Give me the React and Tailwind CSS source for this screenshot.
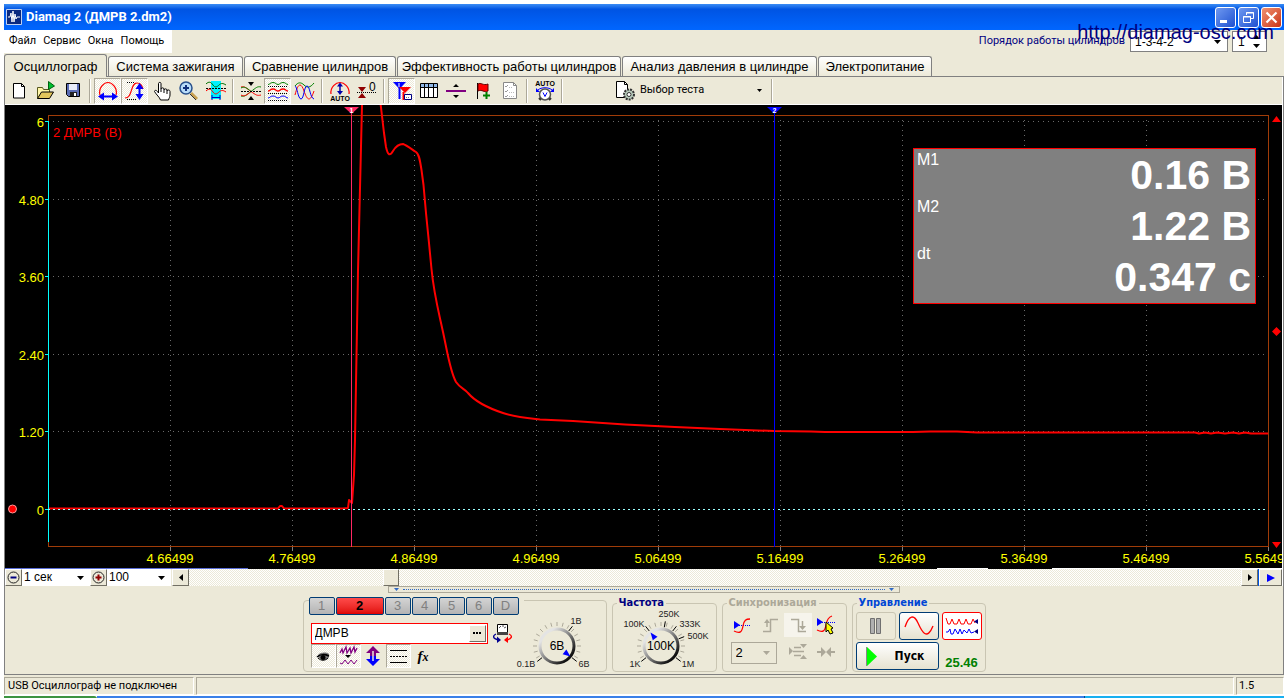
import React, { useState } from "react";

const PRESSED =
  "border border-t-[#aca899] border-l-[#aca899] border-b-white border-r-white bg-[conic-gradient(#fff_25%,#ece9d8_0_50%,#fff_0_75%,#ece9d8_0)] bg-[length:2px_2px]";

const tabs = [
  { label: "Осциллограф", width: "w-[103px]" },
  { label: "Система зажигания", width: "w-[135px]" },
  { label: "Сравнение цилиндров", width: "w-[152px]" },
  { label: "Эффективность работы цилиндров", width: "w-[224px]" },
  { label: "Анализ давления в цилиндре", width: "w-[195px]" },
  { label: "Электропитание", width: "w-[114px]" },
];

/* ---------- toolbar icons ---------- */

const Icon = ({ children, w = 22, h = 22 }) => (
  <svg width={w} height={h} viewBox={`0 0 ${w} ${h}`} fill="none" aria-hidden="true">
    {children}
  </svg>
);

const NewIcon = () => (
  <Icon>
    <path d="M5.5 3.5h8l3 3v11.5h-11z" fill="#fff" stroke="#000" />
    <path d="M13.5 3.5v3h3" stroke="#000" />
  </Icon>
);

const OpenIcon = () => (
  <Icon>
    <path d="M2.5 18.5v-11h5l1 2h6v3" fill="#fff6a8" stroke="#5a5a20" />
    <path d="M2.5 18.5l4-6.5h12l-4 6.5z" fill="#e2c65c" stroke="#000" />
    <path d="M13.5 1.5v8l6-3.5z" fill="#00c030" stroke="#006010" />
  </Icon>
);

const SaveIcon = () => (
  <Icon>
    <path d="M4.5 3.5h13v13h-11l-2-2z" fill="#5a6cb4" stroke="#000" />
    <path d="M7 4h8v6h-8z" fill="#e8ecf8" />
    <path d="M8 12h7v4h-7z" fill="#222" />
    <path d="M12 13h2v3h-2z" fill="#fff" />
  </Icon>
);

const HorizontalIcon = () => (
  <Icon>
    <path d="M3 15C1 8 7 2.500 11 2.500S21 8 19 15" stroke="#f00" strokeWidth="1.200" />
    <path d="M5 16.500h12" stroke="#00f" strokeWidth="2" />
    <path d="M1 16.500l6-4v8zM21 16.500l-6-4v8z" fill="#00f" />
  </Icon>
);

const VerticalIcon = () => (
  <Icon>
    <path d="M3 2.500h8M3 19.500h10" stroke="#000" strokeDasharray="1 1" />
    <path d="M1 18c8 0 5-15 12-15 3 0 5 2 6 6" stroke="#f00" strokeWidth="1.200" />
    <path d="M15.500 7v10" stroke="#00f" strokeWidth="2" />
    <path d="M15.500 3l-4 6h8zM15.500 20l-4-6h8z" fill="#00f" />
  </Icon>
);

const HandIcon = () => (
  <Icon>
    <path
      d="M7.500 13V3.500c0-1.500 2.500-1.500 2.500 0V9c0-1.500 3-1.500 3 0v1c0-1.500 3-1.500 3 0v1c0-1.500 3-1.500 3 .5V15c0 2-1 3-1.500 5h-8c-1-3-4-5-6-8.500 0-1.500 2-2 4 1.500z"
      fill="#fff"
      stroke="#000"
    />
    <path d="M10 9v3M13 10v3M16 11v3" stroke="#000" />
  </Icon>
);

const ZoomIcon = () => (
  <Icon>
    <path d="M13 13l6 6" stroke="#c8a050" strokeWidth="3" />
    <path d="M12 14l6 6" stroke="#303030" strokeWidth="1" />
    <circle cx="8" cy="8" r="6" fill="#b8dcf8" stroke="#28508c" strokeWidth="1.500" />
    <path d="M8 5v6M5 8h6" stroke="#10307c" strokeWidth="2" />
  </Icon>
);

const SelectionIcon = () => (
  <Icon>
    <path d="M6 1h10v18h-10z" fill="#00f0ff" />
    <path d="M1 4c3-3 5-2 7 1s4 2 6 0 4-2 7 0" stroke="#007000" />
    <path d="M1 8.500h20" stroke="#000" strokeDasharray="2 1" />
    <path d="M1 11c3-3 5-2 7 1s4 2 6 0 4-2 7 0" stroke="#f00" />
    <path d="M7 17.500h8M7 15v5M15 15v5" stroke="#0000c0" />
  </Icon>
);

const MergeIcon = () => (
  <Icon>
    <path d="M1 7c4-1 5 1 10 4.500S17 16 21 15" stroke="#f00" />
    <path d="M1 8c3-2 6 0 10 3.500" stroke="#008000" />
    <path d="M1 16c4 1 5-1 10-4.500S17 6 21 7" stroke="#008000" />
    <path d="M1 15c3 2 6 0 10-3.500" stroke="#f00" />
    <path d="M1 11.500h20" stroke="#000" strokeDasharray="2 1" />
    <path d="M8 2h6l-3 4zM8 20h6l-3-4z" fill="#000" />
  </Icon>
);

const StackIcon = () => (
  <Icon>
    <path d="M1 4.500c2 0 2-2 5-2s3 2 5 2 2-2 5-2 3 2 5 2" stroke="#008000" />
    <path d="M1 11c2 0 2-2 5-2s3 2 5 2 2-2 5-2 3 2 5 2" stroke="#f00" strokeWidth="1.300" />
    <path d="M1 18c2 0 2-2 5-2s3 2 5 2 2-2 5-2 3 2 5 2" stroke="#00f" />
    <path d="M1 6.500h20M1 13.500h20M1 20.500h20" stroke="#000" strokeDasharray="1 1" />
  </Icon>
);

const OverlayIcon = () => (
  <Icon>
    <path d="M1 6c3-4 6-4 9-1s6 3 10-2" stroke="#008000" />
    <path d="M1 15c3-12 6-13 9-4s6 12 10 0" stroke="#f00" />
    <path d="M1 6c2 0 3 13 6 13s3-13 6-13 3 12 7 13" stroke="#00f" />
  </Icon>
);

const AutoIcon = () => (
  <Icon>
    <path d="M2 14C1 7 7 2.500 11 2.500S21 7 20 14" stroke="#f00" strokeWidth="1.200" />
    <path d="M11 5v8" stroke="#00a" strokeWidth="1.500" />
    <path d="M11 2.500l-3 4h6zM11 15l-3-4h6z" fill="#00a" />
    <text x="11" y="21" textAnchor="middle" fontSize="7" fontWeight="700" fill="#000">
      AUTO
    </text>
  </Icon>
);

const ZeroIcon = () => (
  <Icon>
    <path d="M2 7h8l-4 5zM2 18h8l-4-5z" fill="#900000" />
    <path d="M1 12.500h20" stroke="#000" strokeDasharray="1 1" />
    <text x="13" y="11" fontSize="12" fill="#000">
      0
    </text>
  </Icon>
);

const MarkersIcon = () => (
  <Icon>
    <path d="M2 2h13l-6.500 7z" fill="#00f" />
    <path d="M8.500 8v11" stroke="#00f" strokeWidth="2" />
    <path d="M8 7h12l-6 6z" fill="#f00" />
    <path d="M12.500 12v8" stroke="#f00" strokeWidth="2" />
    <path d="M8 3v4" stroke="#fff" />
    <path d="M13.500 14.500h7v5h-7z" fill="#fff" stroke="#000080" />
    <path d="M15 17.500h4" stroke="#777" strokeDasharray="1 1" />
  </Icon>
);

const TableIcon = () => (
  <Icon>
    <path d="M2.500 3.500h17v14h-17z" fill="#fff" stroke="#000" />
    <path d="M3 4h16v3h-16z" fill="#90b8e8" />
    <path d="M2 7.500h18M6.500 4v13M10.500 4v13M15.500 4v13" stroke="#000" />
  </Icon>
);

const SplitIcon = () => (
  <Icon>
    <path d="M1 11h20" stroke="#800080" strokeWidth="2" />
    <path d="M8 7h6l-3-3zM8 15h6l-3 3z" fill="#000" />
  </Icon>
);

const FlagIcon = () => (
  <Icon>
    <path d="M5.500 3v16" stroke="#000" />
    <path d="M6 4c3-2 5 2 10 0v7c-4 2-6-2-10 0z" fill="#f00" stroke="#600000" />
    <path d="M14.500 12v7M11 15.500h7" stroke="#008000" strokeWidth="2" />
  </Icon>
);

const ChecklistIcon = () => (
  <Icon>
    <path d="M4.500 2.500h10l3 3v13h-13z" fill="#fff" stroke="#888" />
    <path d="M14.500 2.500v3h3" stroke="#888" />
    <path d="M6 6l1 1 2-2M6 11l1 1 2-2M6 16l1 1 2-2" stroke="#999" />
    <path d="M10 7.500h4M10 12.500h5M10 16.500h5" stroke="#bbb" strokeDasharray="1 1" />
  </Icon>
);

const AutoVoltIcon = () => (
  <Icon>
    <text x="11" y="6" textAnchor="middle" fontSize="7" fontWeight="700" fill="#000">
      AUTO
    </text>
    <path d="M4 10c3-3 11-3 14 0" stroke="#00f" />
    <path d="M2 8v4h4zM20 8v4h-4z" fill="#00f" />
    <circle cx="11" cy="14.500" r="5.500" fill="#fff" stroke="#555" strokeWidth="1.500" />
    <path d="M9 12.500l2 4 2-4" stroke="#00f" />
    <path d="M5 18l2 2M17 18l-2 2" stroke="#333" strokeWidth="2" />
  </Icon>
);

const TestIcon = () => (
  <Icon>
    <path d="M2.500 1.500h8l3 3v13h-11z" fill="#fff" stroke="#000" />
    <path d="M10.500 1.500v3h3" stroke="#000" />
    <circle cx="15" cy="14.500" r="5" fill="#b8ccbc" stroke="#333" strokeWidth="2" strokeDasharray="2 1" />
    <circle cx="15" cy="14.500" r="2" fill="#fff" stroke="#333" />
  </Icon>
);

const toolGroups = [
  [
    { name: "Новый", icon: NewIcon },
    { name: "Открыть", icon: OpenIcon },
    { name: "Сохранить", icon: SaveIcon },
  ],
  [
    { name: "По горизонтали", icon: HorizontalIcon, pressed: true },
    { name: "По вертикали", icon: VerticalIcon, pressed: true },
    { name: "Рука", icon: HandIcon },
    { name: "Масштаб", icon: ZoomIcon },
    { name: "Выделение", icon: SelectionIcon },
  ],
  [
    { name: "Совместить", icon: MergeIcon },
    { name: "Разнести", icon: StackIcon, pressed: true },
    { name: "Наложить", icon: OverlayIcon },
  ],
  [
    { name: "Автомасштаб", icon: AutoIcon },
    { name: "Ноль", icon: ZeroIcon },
  ],
  [
    { name: "Маркеры", icon: MarkersIcon, pressed: true },
    { name: "Таблица", icon: TableIcon },
    { name: "Разделитель", icon: SplitIcon },
    { name: "Метка", icon: FlagIcon },
    { name: "Список", icon: ChecklistIcon },
  ],
  [{ name: "Авто вольтметр", icon: AutoVoltIcon }],
];

const Separator = () => (
  <div className="mx-[3px] h-[24px] w-[2px] border-l border-[#aca899] bg-white" />
);

/* A select without the native arrow, so that the small black one can be used */
const Combo = ({ label, options, className, selectClass = "", arrow = "#000", disabled }) => (
  <div className={`relative flex items-center ${className}`}>
    <select
      aria-label={label}
      disabled={disabled}
      className={`h-full w-full appearance-none bg-transparent outline-none ${selectClass}`}
    >
      {options.map((o) => (
        <option key={o}>{o}</option>
      ))}
    </select>
    <svg className="pointer-events-none absolute right-[6px]" width="7" height="4" viewBox="0 0 7 4">
      <path d="M0 0h7l-3.500 4z" fill={arrow} />
    </svg>
  </div>
);

/* ---------- title, menu, tabs ---------- */

const TitleBar = () => (
  <header className="flex h-[26px] items-center gap-[4px] bg-linear-to-b from-[#3a8cf4] via-[#0054e3] via-20% to-[#0066ff] px-[2px]">
    <svg width="16" height="16" viewBox="0 0 16 16" aria-hidden="true">
      <path d="M.5.5h15v15H.5z" fill="#0a2a80" stroke="#c0d0f0" />
      <path d="M2 8h2l1-4 1 9 1-11 1 11 1-8 1 5 1-2h3" stroke="#fff" fill="none" />
    </svg>
    <h1 className="flex-1 font-[Roboto,'Liberation_Sans',sans-serif] text-[13px] font-bold text-white">
      Diamag 2 (ДМРВ 2.dm2)
    </h1>
    <div className="flex gap-[2px]">
      <button aria-label="Свернуть" className="h-[21px] w-[21px] rounded-[3px] border border-white bg-linear-to-br from-[#6f98f0] to-[#1f4fd0]">
        <svg width="19" height="19" viewBox="0 0 19 19">
          <path d="M4 12h7v3H4z" fill="#fff" />
        </svg>
      </button>
      <button aria-label="Восстановить" className="h-[21px] w-[21px] rounded-[3px] border border-white bg-linear-to-br from-[#6f98f0] to-[#1f4fd0]">
        <svg width="19" height="19" viewBox="0 0 19 19" fill="none" stroke="#fff">
          <path d="M7.500 7V4.500h7v6H12M7 5h8" />
          <path d="M4.500 8.500h7v6h-7zM4 9h8" />
        </svg>
      </button>
      <button aria-label="Закрыть" className="h-[21px] w-[21px] rounded-[3px] border border-white bg-linear-to-br from-[#f09070] to-[#c83010]">
        <svg width="19" height="19" viewBox="0 0 19 19">
          <path d="M4.500 4.500l10 10M14.500 4.500l-10 10" stroke="#fff" strokeWidth="2.200" />
        </svg>
      </button>
    </div>
  </header>
);

const MenuBar = () => (
  <div className="flex h-[25px] items-start justify-between pr-[17px]">
    <nav className="flex h-[23px] items-center gap-[7px] bg-white pr-[8px] pl-[5px] font-[Roboto,'Liberation_Sans',sans-serif] text-[11px]">
      {["Файл", "Сервис", "Окна", "Помощь"].map((item) => (
        <button key={item}>{item}</button>
      ))}
    </nav>
    <div className="relative flex items-center gap-[5px] pt-[1px]">
      <label htmlFor="order" className="font-[Roboto,'Liberation_Sans',sans-serif] text-[11px] text-[#000080]">
        Порядок работы цилиндров
      </label>
      <div className="relative flex h-[21px] w-[98px] items-center border border-[#808080] bg-white">
        <select id="order" className="h-full w-full appearance-none pl-[4px] text-[12px] leading-none outline-none">
          <option>1-3-4-2</option>
        </select>
        <svg className="pointer-events-none absolute right-[6px]" width="7" height="4" viewBox="0 0 7 4">
          <path d="M0 0h7l-3.500 4z" fill="#000" />
        </svg>
      </div>
      <div className="-ml-[1px] flex h-[21px] w-[35px] items-center border border-[#808080] bg-white pr-[6px]">
        <input aria-label="Цилиндр" defaultValue="1" className="w-full min-w-0 pl-[5px] text-[12px] outline-none" />
        <svg width="7" height="13" viewBox="0 0 7 13" className="shrink-0">
          <path d="M0 4h7L3.500 0zM0 9h7l-3.500 4z" fill="#000" />
        </svg>
      </div>
      <a
        href="http://diamag-osc.com"
        className="absolute -right-[7px] -top-[9px] text-[20px] leading-[22px] text-[#000080]"
      >
        http://diamag-osc.com
      </a>
    </div>
  </div>
);

const TabBar = ({ active, onSelect }) => (
  <div role="tablist" className="flex h-[22px] items-end gap-[1px] border-b border-[#808080]">
    {tabs.map((tab, i) => (
      <button
        key={tab.label}
        role="tab"
        aria-selected={i === active}
        onClick={() => onSelect(i)}
        className={`shrink-0 rounded-t-[3px] border border-[#808080] text-center text-[13px] whitespace-nowrap ${tab.width} ${
          i === active
            ? "-mb-[1px] h-[23px] border-b-0 bg-[#ece9d8] leading-[21px]"
            : "h-[20px] border-b-0 bg-linear-to-b from-white to-[#ece9d8] leading-[20px]"
        }`}
      >
        {tab.label}
      </button>
    ))}
  </div>
);

const Toolbar = () => (
  <div className="flex h-[28px] items-center border-b border-white">
    {toolGroups.map((group, g) => (
      <React.Fragment key={g}>
        {group.map(({ name, icon: ToolIcon, pressed }) => (
          <button
            key={name}
            title={name}
            aria-label={name}
            className={`flex h-[26px] w-[27px] items-center justify-center ${pressed ? PRESSED : ""}`}
          >
            <ToolIcon />
          </button>
        ))}
        <Separator />
      </React.Fragment>
    ))}
    <label htmlFor="test" className="ml-[48px]">
      <TestIcon />
    </label>
    <div className="relative flex items-center">
      <select id="test" aria-label="Выбор теста" className="w-[132px] appearance-none pl-[4px] font-[Roboto,'Liberation_Sans',sans-serif] text-[11px] outline-none">
        <option>Выбор теста</option>
      </select>
      <svg className="pointer-events-none absolute right-[6px]" width="5" height="3" viewBox="0 0 5 3">
        <path d="M0 0h5L2.500 3z" fill="#000" />
      </svg>
    </div>
    <Separator />
  </div>
);

/* ---------- chart ---------- */

const PLOT = { left: 43, right: 1263, top: 10, bottom: 442 };
const X_STEP = 122;
const volts = ["6", "4.80", "3.60", "2.40", "1.20", "0"];
const times = [
  "4.66499", "4.76499", "4.86499", "4.96499", "5.06499",
  "5.16499", "5.26499", "5.36499", "5.46499", "5.56499",
];
const voltY = (i) => Math.round(16 + i * 77.6) + 0.5;

const TRACE =
  "M44 403.500H273L275 401H277L279 403.500H338L343 403L344 395L347 398L349 370" +
  "L350 335L353 166L357 0V-20H375L375.700 0L379 28L381 42C383 51 385 51 388 46" +
  "C391 41 394 39 398 39C401 40 405 43 411 47C414 49 415 55 416.500 65" +
  "L418.500 80L421 108L424 138L426.500 164C429 190 434 208 438 227" +
  "C443 250 445 266 451 277C455 283 460 284 463 288C468 294 480 302 498 308" +
  "C510 312 522 313 535 314.500L568 316L620 319.500L670 322L715 324L769 326L806 326.500" +
  "L820 327H908L925 326.500H952L972 327.500H1190L1194 328.500L1200 327.500L1206 328.500L1212 327.500" +
  "L1220 328.500L1228 327.500L1234 328.500L1240 327.500L1246 328.500H1263";

const readings = [
  { label: "M1", value: "0.16 В" },
  { label: "M2", value: "1.22 В" },
  { label: "dt", value: "0.347 с" },
];

const Chart = () => (
  <div className="relative bg-black">
    <svg viewBox="0 0 1277 463" className="block h-auto w-full" role="img" aria-label="2 ДМРВ (В)">
      {/* Grid */}
      <g stroke="#6a6a6a" strokeDasharray="1 4" shapeRendering="crispEdges">
        {volts.slice(0, 5).map((v, i) => (
          <path key={v} d={`M${PLOT.left} ${voltY(i)}H${PLOT.right}`} />
        ))}
        {times.slice(0, 9).map((t, i) => (
          <path key={t} d={`M${PLOT.left + X_STEP * (i + 1) + 0.5} ${PLOT.top + 5}V${PLOT.bottom}`} />
        ))}
      </g>
      <g stroke="#808080" shapeRendering="crispEdges">
        {times.map((t, i) => (
          <path key={t} d={`M${PLOT.left + X_STEP * (i + 1) + 0.5} ${PLOT.bottom}v4`} />
        ))}
      </g>
      <rect
        x={PLOT.left + 0.5}
        y={PLOT.top + 0.5}
        width={PLOT.right - PLOT.left}
        height={PLOT.bottom - PLOT.top - 1}
        fill="none"
        stroke="#a03c08"
        shapeRendering="crispEdges"
      />

      {/* Value axis */}
      <g stroke="#0ff" shapeRendering="crispEdges">
        <path d="M43.500 16V437" />
        {volts.map((v, i) => (
          <path key={v} d={`M40 ${voltY(i)}h4`} />
        ))}
      </g>
      <g fill="#ff0" fontSize="13" textAnchor="end">
        {volts.map((v, i) => (
          <text key={v} x="39" y={voltY(i) + 5}>
            {v}
          </text>
        ))}
      </g>
      <g fill="#ff0" fontSize="13" textAnchor="middle">
        {times.map((t, i) => (
          <text key={t} x={PLOT.left + X_STEP * (i + 1)} y="458">
            {t}
          </text>
        ))}
      </g>
      <text x="48" y="32" fill="#f00" fontSize="13">
        2 ДМРВ (В)
      </text>

      <path d={TRACE} fill="none" stroke="#f00" strokeWidth="2" strokeLinejoin="round" />
      <path d="M43 404.500H1263" stroke="#9ff" strokeDasharray="2 3" shapeRendering="crispEdges" />

      {/* Markers */}
      <path d={`M346.500 4V${PLOT.bottom}`} stroke="#ff2864" shapeRendering="crispEdges" />
      <path d="M339 2h15l-7.500 7z" fill="#ff2864" />
      <path d={`M769.500 4V${PLOT.bottom}`} stroke="#00f" shapeRendering="crispEdges" />
      <path d="M762 2h15l-7.500 7z" fill="#00f" />
      <g fill="#fff" fontSize="7" fontWeight="700" textAnchor="middle">
        <text x="346.500" y="8">1</text>
        <text x="769.500" y="8">2</text>
      </g>

      <circle cx="7.500" cy="404" r="4" fill="#f00" stroke="#f99" />
      <path d="M1267 17h9l-4.500-6zM1267 437h9l-4.500 6zM1271.500 222l4.500 4.500-4.500 4.500-4.500-4.500z" fill="#f00" />
    </svg>

    {/* Marker readings float over the plot */}
    <div className="absolute top-[43px] right-[26px] flex w-[343px] justify-between border border-[#f00] bg-[#808080] pt-[1px] pr-[4px] pl-[3px] text-white">
      <div className="text-[16px]">
        {readings.map((r) => (
          <div key={r.label} className="h-[47px] leading-[20px]">
            {r.label}
          </div>
        ))}
      </div>
      <div className="text-right text-[41px] leading-[51px] font-bold">
        {readings.map((r) => (
          <div key={r.label}>{r.value}</div>
        ))}
      </div>
    </div>
  </div>
);

/* ---------- scroll row ---------- */

const RAISED =
  "flex h-[17px] shrink-0 items-center justify-center border border-t-white border-l-white border-r-[#716f64] border-b-[#716f64] bg-[#ece9d8]";

const ScrollRow = () => (
  <div>
    <div className="flex h-px bg-white">
      <div className="w-[19%] bg-[#5a6ed8]" />
      <div className="w-[54%] bg-black" />
      <div className="w-[4%]" />
      <div className="w-[5%] bg-black" />
    </div>
    <div className="flex h-[17px] items-center">
      <button aria-label="Уменьшить" className={`${RAISED} w-[17px]`}>
        <svg width="13" height="13" viewBox="0 0 13 13" fill="none">
          <circle cx="6.500" cy="6.500" r="5.500" stroke="#222" />
          <path d="M3.500 6.500h6" stroke="#000080" strokeWidth="2" />
        </svg>
      </button>
      <Combo label="Развертка" options={["1 сек"]} className="h-[17px] w-[68px] bg-white" selectClass="pl-[2px] text-[12px] leading-[17px]" />
      <button aria-label="Увеличить" className={`${RAISED} w-[17px]`}>
        <svg width="13" height="13" viewBox="0 0 13 13" fill="none">
          <circle cx="6.500" cy="6.500" r="5.500" stroke="#222" />
          <path d="M3.500 6.500h6M6.500 3.500v6" stroke="#900000" strokeWidth="2" />
        </svg>
      </button>
      <Combo label="Масштаб" options={["100"]} className="mr-[1px] h-[17px] w-[64px] bg-white" selectClass="pl-[2px] text-[12px] leading-[17px]" />
      <button aria-label="Назад" className={`${RAISED} w-[17px]`}>
        <svg width="4" height="7" viewBox="0 0 4 7">
          <path d="M4 0v7L0 3.500z" />
        </svg>
      </button>
      <input
        type="range"
        aria-label="Прокрутка"
        min="0"
        max="1000"
        defaultValue="187"
        className="h-[17px] min-w-0 flex-1 appearance-none bg-[conic-gradient(#fff_25%,#ece9d8_0_50%,#fff_0_75%,#ece9d8_0)] bg-[length:2px_2px] [&::-webkit-slider-thumb]:h-[17px] [&::-webkit-slider-thumb]:w-[16px] [&::-webkit-slider-thumb]:appearance-none [&::-webkit-slider-thumb]:border [&::-webkit-slider-thumb]:border-t-white [&::-webkit-slider-thumb]:border-r-[#716f64] [&::-webkit-slider-thumb]:border-b-[#716f64] [&::-webkit-slider-thumb]:border-l-white [&::-webkit-slider-thumb]:bg-[#ece9d8]"
      />
      <button aria-label="Вперед" className={`${RAISED} w-[17px]`}>
        <svg width="4" height="7" viewBox="0 0 4 7">
          <path d="M0 0v7l4-3.500z" />
        </svg>
      </button>
      <div className="h-[17px] w-[1px] bg-[#0054e3]" />
      <button aria-label="В конец" className={`${RAISED} w-[23px]`}>
        <svg width="8" height="8" viewBox="0 0 8 8">
          <path d="M0 0v8l8-4z" fill="#00f" />
        </svg>
      </button>
    </div>
  </div>
);

/* ---------- bottom panels ---------- */

const Group = ({ title, titleClass = "text-[#000080]", className, children }) => (
  <fieldset className={`h-[75px] rounded-[4px] border border-[#c9c5b2] ${className}`}>
    <legend className={`ml-[4px] px-[2px] font-['DejaVu_Sans_Condensed','DejaVu_Sans',sans-serif] text-[11px] leading-[12px] font-bold ${titleClass}`}>
      {title}
    </legend>
    {children}
  </fieldset>
);

/* Dial: angles in degrees, 0 is up, clockwise */
const polar = (angle, r) => {
  const a = (angle * Math.PI) / 180;
  return [Math.sin(a) * r, -Math.cos(a) * r];
};

const Knob = ({ value, pointer, marks, w, h, cx, cy, id }) => {
  const ticks = Array.from({ length: 17 }, (_, i) => -120 + i * 15);
  const [px, py] = polar(pointer, 13);
  return (
    <svg width={w} height={h} viewBox={`${-cx} ${-cy} ${w} ${h}`} role="img" aria-label={value} className="block">
      <defs>
        <linearGradient id={id} x1="0" y1="0" x2="1" y2="1">
          <stop offset="0.200" stopColor="#e4e4e4" />
          <stop offset="0.850" stopColor="#101010" />
        </linearGradient>
      </defs>
      {ticks.map((t) => {
        const [x1, y1] = polar(t, 20);
        const [x2, y2] = polar(t, 24);
        return <line key={t} x1={x1} y1={y1} x2={x2} y2={y2} stroke="#aca899" />;
      })}
      {marks.map((m) => {
        const [x1, y1] = polar(m.angle, 19);
        const [x2, y2] = polar(m.angle, 25);
        return (
          <g key={m.label}>
            <line x1={x1} y1={y1} x2={x2} y2={y2} stroke="#000" />
            <text x={m.x} y={m.y} fontSize="9" textAnchor="middle" fill="#222">
              {m.label}
            </text>
          </g>
        );
      })}
      <circle r="17" fill="#ece9d8" stroke={`url(#${id})`} strokeWidth="3" />
      <path d="M-3 3.500L0-4l3 7.500z" fill="#00f" transform={`translate(${px} ${py}) rotate(${pointer})`} />
      <text y="4" fontSize="12" textAnchor="middle" fill="#000">
        {value}
      </text>
    </svg>
  );
};

const channelMarks = [
  { label: "0.1В", angle: -128, x: -31, y: 21 },
  { label: "1В", angle: 38, x: 19, y: -22 },
  { label: "6В", angle: 128, x: 27, y: 21 },
];

const rateMarks = [
  { label: "1K", angle: -128, x: -26, y: 21 },
  { label: "100K", angle: -38, x: -27, y: -19 },
  { label: "250K", angle: 10, x: 8, y: -29 },
  { label: "333K", angle: 38, x: 29, y: -19 },
  { label: "500K", angle: 68, x: 37, y: -7 },
  { label: "1M", angle: 128, x: 27, y: 21 },
];

const channelTools = [
  {
    name: "Показать",
    pressed: true,
    icon: (
      <Icon>
        <path d="M6 10c3-3 8-3 11-1l0 3c-1 4-8 4-11 0z" fill="#777" />
        <path d="M5 12c3-3 8-3 12-1" stroke="#000" strokeWidth="1.500" />
        <circle cx="11" cy="12.500" r="2.500" fill="#000" />
        <path d="M6 13c3 3 7 3 10 0" stroke="#000" />
      </Icon>
    ),
  },
  {
    name: "Фильтр",
    pressed: true,
    icon: (
      <Icon>
        <path d="M3 8l2-4 1 4 3-6 1 6 3-5 1 5 3-6 1 5 2-4" stroke="#800080" strokeWidth="1.300" />
        <path d="M8 10h6l-3 3z" fill="#000" />
        <path d="M3 18l2 1 3-4 3 4 3-4 3 4 3-4" stroke="#800080" />
      </Icon>
    ),
  },
  {
    name: "Смещение",
    icon: (
      <Icon>
        <path d="M11 1l7 7h-4v3h-6V8H4z" fill="#800080" />
        <path d="M11 21l7-7h-4v-3h-6v3H4z" fill="#00f" />
        <path d="M11 6v10" stroke="#ece9d8" strokeWidth="1.500" />
      </Icon>
    ),
  },
  {
    name: "Линии",
    pressed: true,
    icon: (
      <Icon>
        <path d="M3 5.500h17M3 17.500h17" stroke="#000" />
        <path d="M3 11.500h17" stroke="#000" strokeDasharray="2 1" />
      </Icon>
    ),
  },
  {
    name: "Функция",
    icon: <span className="font-['Liberation_Serif',serif] text-[15px] leading-none font-bold italic">f<span className="text-[12px]">x</span></span>,
  },
];

const ChannelPanel = () => {
  const [name, setName] = useState("ДМРВ");
  return (
    <section className="h-[72px] w-[304px] rounded-[4px] border border-[#c9c5b2] pr-px pl-[5px]">
      <div className="flex">
        <div className="-mt-[4px] flex gap-[1px] bg-[#ece9d8] pr-[5px]">
          {["1", "2", "3", "4", "5", "6", "D"].map((ch) => (
            <button
              key={ch}
              className={`h-[18px] rounded-[2px] border border-[#003c74] text-[13px] leading-[16px] ${
                ch === "2"
                  ? "w-[48px] bg-linear-to-b from-[#ff4a4a] to-[#e00000] font-bold text-black"
                  : "w-[26px] bg-linear-to-b from-[#d4d4d4] to-[#b4b4b4] text-[#808080]"
              }`}
            >
              {ch}
            </button>
          ))}
        </div>
      </div>
      <div className="flex justify-between">
        <div className="pt-[7px] pl-[2px]">
          <div className="flex items-center gap-[3px]">
            <div className="flex h-[21px] w-[177px] items-center border border-[#f00] bg-white pr-[1px]">
              <input
                aria-label="Название канала"
                value={name}
                onChange={(e) => setName(e.target.value)}
                className="min-w-0 flex-1 pl-[3px] text-[12px] outline-none"
              />
              <button aria-label="Выбрать" className={`${RAISED} w-[17px]`}>
                <svg width="8" height="2" viewBox="0 0 8 2">
                  <path d="M0 0h2v2H0zM3 0h2v2H3zM6 0h2v2H6z" />
                </svg>
              </button>
            </div>
            <button aria-label="Прибор">
              <Icon>
                <path d="M6.500 2.500h10v8h-10z" fill="#fff" stroke="#000" />
                <path d="M8 6l2-2M12 3v2M13 6l2-1" stroke="#555" />
                <path d="M6 10h11v3H6z" fill="#444" />
                <path d="M5 12c-4 2-3 5 3 6" stroke="#000090" strokeWidth="1.300" />
                <path d="M6 14.500l4 3.500-4 3z" fill="#000090" />
                <path d="M18 12c4 2 3 5-3 6" stroke="#f00" strokeWidth="1.300" />
                <path d="M17 14.500l-4 3.500 4 3z" fill="#f00" />
              </Icon>
            </button>
          </div>
          <div className="flex">
            {channelTools.map((t) => (
              <button
                key={t.name}
                aria-label={t.name}
                className={`flex h-[24px] w-[25px] items-center justify-center ${t.pressed ? PRESSED : ""}`}
              >
                {t.icon}
              </button>
            ))}
          </div>
        </div>
        <Knob id="knob-v" value="6В" pointer={128} marks={channelMarks} w={92} h={56} cx={44} cy={31} />
      </div>
    </section>
  );
};

const RatePanel = () => (
  <Group title="Частота" className="w-[105px]">
    <Knob id="knob-f" value="100K" pointer={-38} marks={rateMarks} w={103} h={62} cx={48} cy={37} />
  </Group>
);

const SyncPanel = () => (
  <Group title="Синхронизация" titleClass="text-[#aca899]" className="w-[125px]">
    <div className="grid grid-cols-4 gap-y-[5px] px-[5px] pt-[4px]">
      <button aria-label="Уровень" className="flex h-[24px] items-center justify-center">
        <Icon>
          <path d="M3 7v8l6-4z" fill="#00f" />
          <path d="M8 11.500h12" stroke="#00f" strokeDasharray="1 1" />
          <path d="M3 17c6 3 8 1 9-5s3-7 7-7" stroke="#f00" strokeWidth="1.300" />
        </Icon>
      </button>
      <button disabled aria-label="Фронт" className="flex h-[24px] items-center justify-center">
        <Icon>
          <path d="M4 17.500h7.500v-12H19" stroke="#aca899" strokeWidth="1.500" />
          <path d="M8 13V7" stroke="#aca899" strokeWidth="1.500" />
          <path d="M5 9h6L8 5z" fill="#aca899" />
        </Icon>
      </button>
      <button disabled aria-label="Спад" className="flex h-[24px] items-center justify-center bg-[#f6f4ec]">
        <Icon>
          <path d="M4 5.500h7.500v12H19" stroke="#aca899" strokeWidth="1.500" />
          <path d="M15.500 7v7" stroke="#aca899" strokeWidth="1.500" />
          <path d="M12 12h7l-3.500 4z" fill="#aca899" />
        </Icon>
      </button>
      <button aria-label="Указать" className="flex h-[24px] items-center justify-center">
        <Icon>
          <path d="M2 4v8l6-4z" fill="#00f" />
          <path d="M7 8.500h13" stroke="#00f" strokeDasharray="1 1" />
          <path d="M2 16c6 3 8 1 9-5s3-8 6-9" stroke="#f00" strokeWidth="1.300" />
          <path d="M11 8l7 6-2 1 2 4-3 1-2-4-2 2z" fill="#ff0" stroke="#000" />
        </Icon>
      </button>
      <Combo
        label="Канал синхронизации"
        options={["2"]}
        className="col-span-2 mr-[7px] ml-[3px] h-[22px] border border-[#aca899]"
        selectClass="pl-[4px] text-[13px]"
        arrow="#aca899"
      />
      <button disabled aria-label="Задержка" className="flex h-[20px] items-center justify-center">
        <Icon>
          <path d="M2 6v8l4-4z" fill="#aca899" />
          <path d="M7 6.500h7M7 14.500h7M6 10.500h11" stroke="#aca899" strokeWidth="1.500" />
          <path d="M13 3h7l-3.500 4zM13 18h7l-3.500-4z" fill="#aca899" />
        </Icon>
      </button>
      <button disabled aria-label="Центр" className="flex h-[20px] items-center justify-center">
        <Icon>
          <path d="M2 11h7M13 11h7" stroke="#aca899" strokeWidth="2" />
          <path d="M6 6l5 5-5 5zM16 6l-5 5 5 5z" fill="#aca899" />
        </Icon>
      </button>
    </div>
  </Group>
);

const ControlPanel = () => {
  const button = "flex h-[28px] items-center justify-center rounded-[3px] border bg-linear-to-b from-white to-[#e6e2d0]";
  return (
    <Group title="Управление" titleClass="text-[#0046d5]" className="w-[134px]">
      <div className="grid grid-cols-3 gap-x-[3px] gap-y-[2px] px-[3px] pt-[3px]">
        <button disabled aria-label="Пауза" className="flex h-[28px] items-center justify-center rounded-[3px] border border-[#c9c5b2]">
          <svg width="12" height="16" viewBox="0 0 12 16">
            <path d="M.5.5h4v15h-4zM6.500.5h4v15h-4z" fill="#b0b0b0" stroke="#707070" />
          </svg>
        </button>
        <button aria-label="Однократно" className={`${button} border-[#003c74]`}>
          <svg width="30" height="22" viewBox="0 0 30 22" fill="none">
            <path d="M1 12C5 0 10-1 14 8s9 18 15 3" stroke="#f00" strokeWidth="1.300" />
          </svg>
        </button>
        <button aria-label="Непрерывно" className={`${button} border-[#f00] to-white`}>
          <svg width="34" height="20" viewBox="0 0 34 20" fill="none">
            <path d="M1 2l2 6 2 0 2-5 2 5 3 0 2-5 2 5 3 0 2-5 2 5 3 0 2-5 2 4" stroke="#f00" />
            <path d="M1 16h2l2-3 1 5 2 0 2-5 3 5 2-5 2 5 2-4 3 3 2-4 2 4 3-1" stroke="#00f" />
            <path d="M33 3v5l-4-2.500zM33 13v5l-4-2.500z" fill="#000080" />
          </svg>
        </button>
        <button className={`${button} col-span-2 gap-[18px] border-[#003c74] pr-[4px] font-['DejaVu_Sans_Condensed','DejaVu_Sans',sans-serif] text-[12px] font-bold`}>
          <svg width="11" height="19" viewBox="0 0 11 19">
            <path d="M1 0l10 9.500L1 19z" fill="#0f0" />
            <path d="M.5 0v19" stroke="#888" />
          </svg>
          Пуск
        </button>
        <span className="self-end text-center text-[13px] leading-[15px] font-bold text-[#008000]">25.46</span>
      </div>
    </Group>
  );
};

const StatusBar = () => (
  <footer className="flex gap-[2px] pt-[2px] font-[Roboto,'Liberation_Sans',sans-serif] text-[11px] leading-[16px]">
    <div className="w-[190px] border border-t-[#aca899] border-r-white border-b-white border-l-[#aca899] pl-[3px] whitespace-nowrap">
      USB Осциллограф не подключен
    </div>
    <div className="flex-1 border border-t-[#aca899] border-r-white border-b-white border-l-[#aca899]" />
    <div className="w-[48px] border border-t-[#aca899] border-r-white border-b-white border-l-[#aca899] pl-[2px]">1.5</div>
  </footer>
);

const App = () => {
  const [tab, setTab] = useState(0);

  return (
    <div className="overflow-hidden bg-white px-[4px] pt-[4px] font-['Liberation_Sans',Arial,sans-serif] text-black">
      <div className="bg-[#ece9d8]">
        <TitleBar />
        <MenuBar />
        <TabBar active={tab} onSelect={setTab} />
        <main className="border-r border-b border-l border-[#808080]">
          <div className="border-r border-white">
            <Toolbar />
            <Chart />
            <ScrollRow />
          </div>
          {/* Splitter */}
          <div className="mx-auto flex h-[7px] w-2/5 items-center gap-[4px] border border-[#aca899] px-[5px]">
            <svg width="5" height="3" viewBox="0 0 5 3"><path d="M0 0h5L2.500 3z" fill="#316ac5" /></svg>
            <div className="flex-1 border-t border-dotted border-[#316ac5]" />
            <svg width="5" height="3" viewBox="0 0 5 3"><path d="M0 0h5L2.500 3z" fill="#316ac5" /></svg>
          </div>
          <div className="flex items-end justify-center gap-[5px] pt-[4px] pb-[2px]">
            <ChannelPanel />
            <RatePanel />
            <SyncPanel />
            <ControlPanel />
          </div>
        </main>
        <StatusBar />
      </div>
      <div className="flex h-[4px] border-t border-white">
        <div className="w-[93px] rounded-tr-[4px] bg-[#3c9440]" />
        <div className="flex-1 bg-[#3a80e8]" />
        <div className="w-[200px] border-l border-[#0a4890] bg-[#18b0f0]" />
      </div>
    </div>
  );
};

export default App;
